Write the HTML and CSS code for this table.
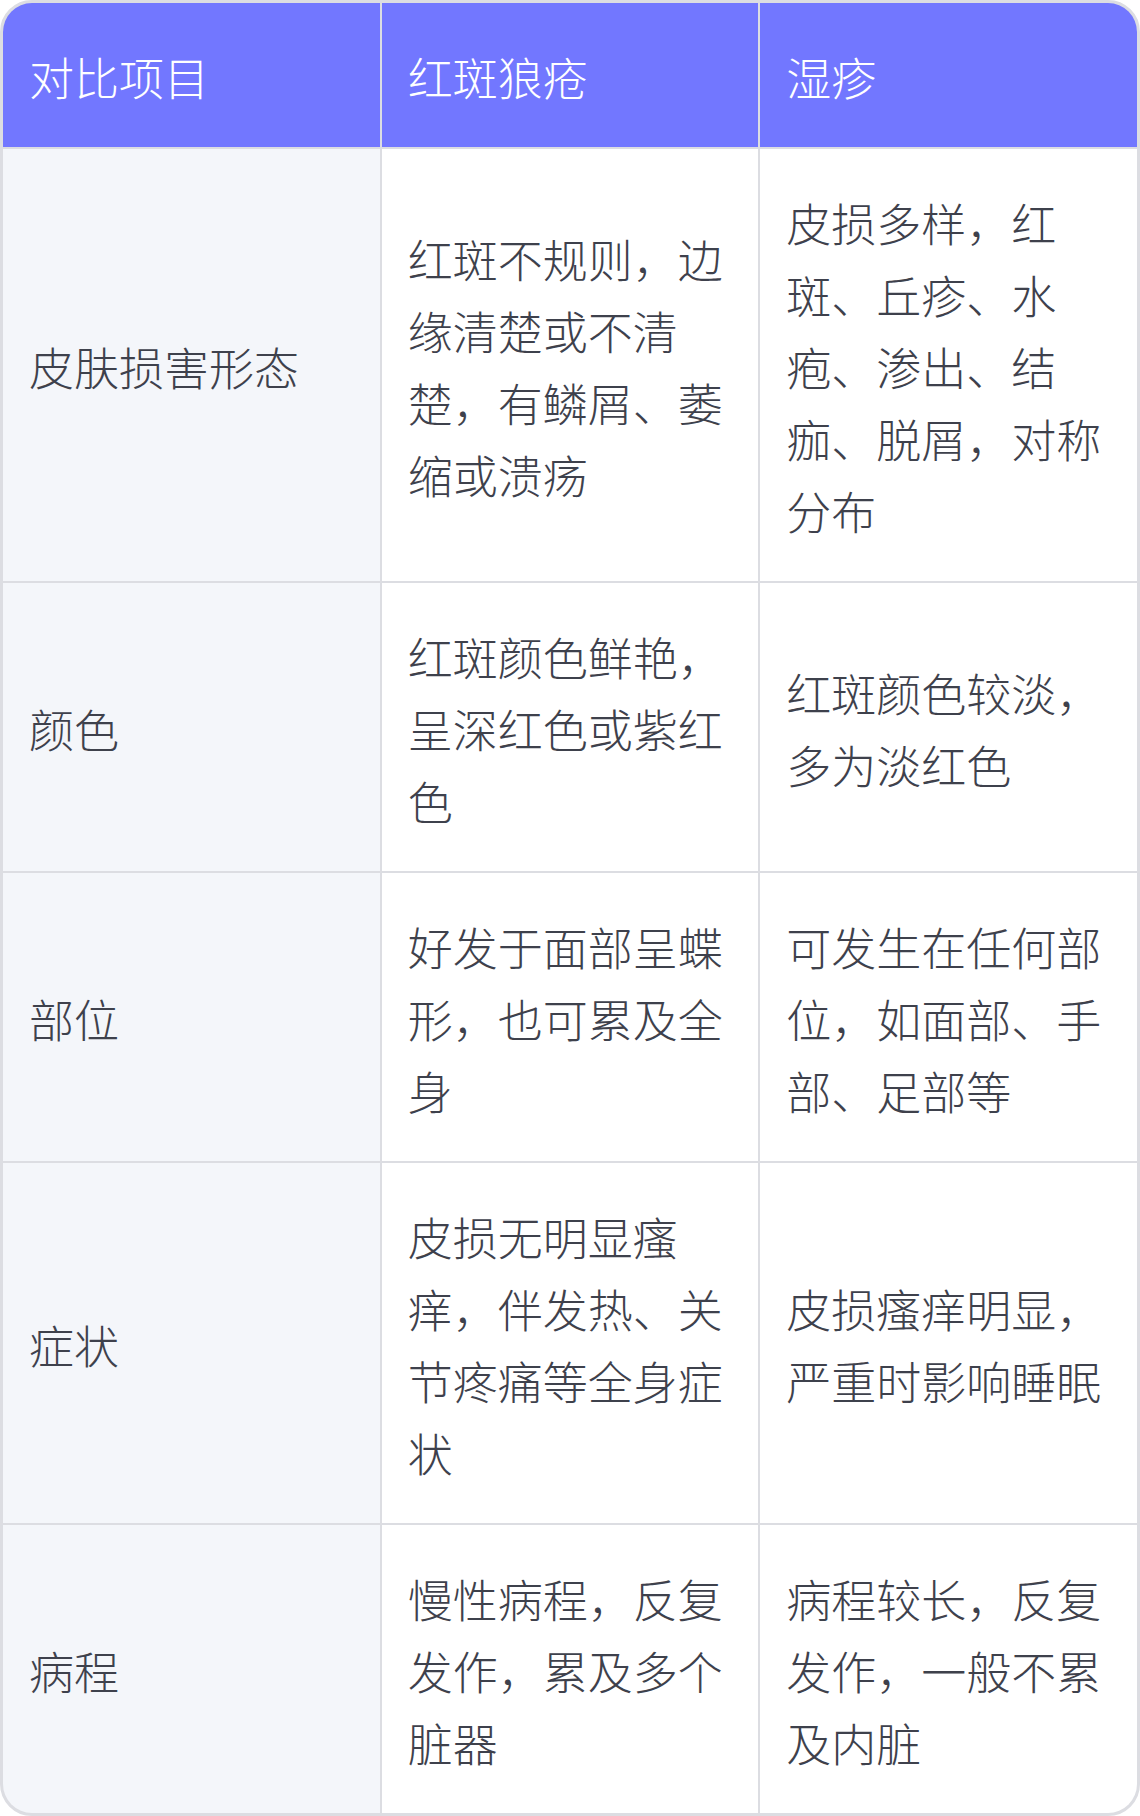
FILE: index.html
```html
<!DOCTYPE html>
<html lang="zh-CN">
<head>
<meta charset="utf-8">
<title>红斑狼疮与湿疹对比</title>
<link rel="stylesheet" href="styles.css">
</head>
<body>
<div class="compare" role="table">
  <div class="cell head" role="columnheader">对比项目</div>
  <div class="cell head" role="columnheader">红斑狼疮</div>
  <div class="cell head" role="columnheader">湿疹</div>

  <div class="cell label" role="cell">皮肤损害形态</div>
  <div class="cell" role="cell">红斑不规则，边缘清楚或不清楚，有鳞屑、萎缩或溃疡</div>
  <div class="cell" role="cell">皮损多样，红斑、丘疹、水疱、渗出、结痂、脱屑，对称分布</div>

  <div class="cell label" role="cell">颜色</div>
  <div class="cell" role="cell">红斑颜色鲜艳，呈深红色或紫红色</div>
  <div class="cell" role="cell">红斑颜色较淡，多为淡红色</div>

  <div class="cell label" role="cell">部位</div>
  <div class="cell" role="cell">好发于面部呈蝶形，也可累及全身</div>
  <div class="cell" role="cell">可发生在任何部位，如面部、手部、足部等</div>

  <div class="cell label" role="cell">症状</div>
  <div class="cell" role="cell">皮损无明显瘙痒，伴发热、关节疼痛等全身症状</div>
  <div class="cell" role="cell">皮损瘙痒明显，严重时影响睡眠</div>

  <div class="cell label" role="cell">病程</div>
  <div class="cell" role="cell">慢性病程，反复发作，累及多个脏器</div>
  <div class="cell" role="cell">病程较长，反复发作，一般不累及内脏</div>
</div>
</body>
</html>
```
FILE: styles.css
```css
html, body {
  margin: 0;
  padding: 0;
  background: #ffffff;
}

.compare {
  display: grid;
  grid-template-columns: repeat(3, 1fr);
  gap: 2px;
  border: 3px solid #dcdde2;
  border-radius: 32px;
  overflow: hidden;
  background: #dcdde2;
  font-family: "Noto Sans CJK SC", "Noto Sans", sans-serif;
  font-weight: 300;
  font-size: 45px;
  line-height: 72px;
  color: #3e414c;
}

.cell {
  display: flex;
  align-items: center;
  padding: 38px 26px 34px 26px;
  background: #ffffff;
  word-break: normal;
  line-break: strict;
}

.head {
  background: #7277ff;
  color: #ffffff;
}

.label {
  background: #f4f6fa;
}
```
